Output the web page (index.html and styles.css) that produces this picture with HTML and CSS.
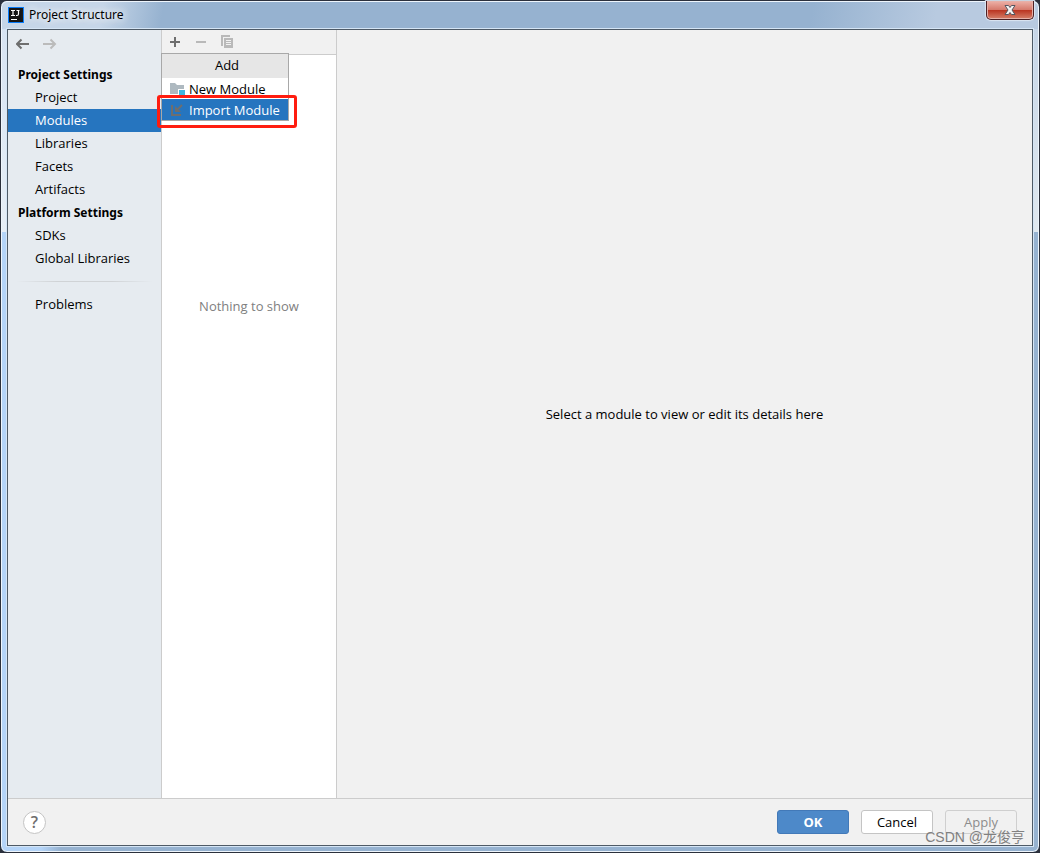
FILE: index.html
```
<!DOCTYPE html>
<html lang="en">
<head>
    <meta charset="UTF-8">
    <meta name="viewport" content="width=device-width, initial-scale=1.0">
    <title>Project Structure</title>

    <link rel="stylesheet" href="styles.css">
</head>
<body>
    <div class="window">
        <!-- Title bar -->
        <header class="title-bar">
            <svg class="app-icon" width="16" height="16" viewBox="0 0 16 16" aria-hidden="true">
                <rect width="16" height="16" fill="#087cfa"/>
                <rect x="1" y="1" width="14" height="14" fill="#151515"/>
                <path d="M3 3.500h4M5 3.500v5M3 8.500h4M8.500 3.500h3M10.500 3.500v3.500q0 1.500-1.500 1.500h-1M3 12.500h6" fill="none" stroke="#fff" stroke-width="1.200"/>
            </svg>
            <h1>Project Structure</h1>
            <button class="close-btn" aria-label="Close">
                <svg width="14" height="12" viewBox="0 0 14 12">
                    <path d="M2 1.500h3.500L7 3.500l1.500-2H12L9 6l3 4.500H8.500L7 8.500l-1.500 2H2L5 6z" fill="#f4f4f4" stroke="#53555f" stroke-width="1"/>
                </svg>
            </button>
        </header>

        <div class="dialog">
            <div class="content">
                <!-- Left navigation -->
                <aside class="sidebar">
                    <div class="history">
                        <button aria-label="Back">
                            <svg width="14" height="12" viewBox="0 0 14 12"><path d="M13 6H2M5.500 1.500L1 6L5.500 10.500"/></svg>
                        </button>
                        <button aria-label="Forward" disabled>
                            <svg width="14" height="12" viewBox="0 0 14 12"><path d="M0 6H11M7.500 1.500L12 6L7.500 10.500"/></svg>
                        </button>
                    </div>
                    <nav>
                        <h2>Project Settings</h2>
                        <a href="#project">Project</a>
                        <a href="#modules" class="active">Modules</a>
                        <a href="#libraries">Libraries</a>
                        <a href="#facets">Facets</a>
                        <a href="#artifacts">Artifacts</a>
                        <h2>Platform Settings</h2>
                        <a href="#sdks">SDKs</a>
                        <a href="#global-libraries">Global Libraries</a>
                        <hr>
                        <a href="#problems">Problems</a>
                    </nav>
                </aside>

                <!-- Module list -->
                <section class="modules">
                    <div class="toolbar">
                        <button aria-label="Add">
                            <svg width="16" height="16" viewBox="0 0 16 16"><path d="M8 3v10M3 8h10" stroke="#6e6e6e" stroke-width="2"/></svg>
                        </button>
                        <button aria-label="Remove" disabled>
                            <svg width="16" height="16" viewBox="0 0 16 16"><path d="M3 8h10" stroke="#b9b9b9" stroke-width="2"/></svg>
                        </button>
                        <button aria-label="Copy" disabled>
                            <svg width="16" height="16" viewBox="0 0 16 16">
                                <path d="M2 1h9v2H4v9H2z" fill="#b9b9b9"/>
                                <path d="M5 4h9v10H5zM7 6v1h5V6zM7 8v1h5V8zM7 10v1h5v-1z" fill="#b9b9b9" fill-rule="evenodd"/>
                            </svg>
                        </button>
                        <div class="popup">
                            <h3>Add</h3>
                            <button>
                                <svg width="16" height="16" viewBox="0 0 16 16">
                                    <path d="M1 2h5l2 2h7v4H9v5H1z" fill="#aeb9c0"/>
                                    <path d="M10 9h6v6h-6z" fill="#40b6e0"/>
                                </svg>
                                New Module
                            </button>
                            <button class="selected">
                                <svg width="16" height="16" viewBox="0 0 16 16">
                                    <path d="M3 3v10h9" fill="none" stroke="#6e6e6e" stroke-width="2"/>
                                    <path d="M13 3L8 8" stroke="#6e6e6e" stroke-width="2"/>
                                    <path d="M6 4v6h6z" fill="#6e6e6e"/>
                                </svg>
                                Import Module
                            </button>
                        </div>
                    </div>
                    <div class="module-list">
                        <p>Nothing to show</p>
                    </div>
                </section>

                <main class="details">
                    <p>Select a module to view or edit its details here</p>
                </main>
            </div>

            <!-- Buttons -->
            <footer class="footer">
                <button class="help-btn" aria-label="Help">?</button>
                <button class="btn primary">OK</button>
                <button class="btn">Cancel</button>
                <button class="btn" disabled>Apply</button>
            </footer>
        </div>
        <span class="watermark">CSDN @龙俊亨</span>
    </div>
</body>
</html>
```

FILE: styles.css
```
*,
*::before,
*::after {
    margin: 0;
    padding: 0;
    box-sizing: border-box;
}

body {
    background: #2b303c;
    font-family: 'Open Sans', 'Noto Sans CJK SC', sans-serif;
    font-size: 13px;
    line-height: 18px;
    color: #000;
}

button {
    border: none;
    background: none;
    font: inherit;
    color: inherit;
}

svg {
    display: block;
}

/* Window frame */
.window {
    position: relative;
    display: flex;
    flex-direction: column;
    height: 100vh;
    padding: 0 6px 6px;
    border: 1px solid #2b303c;
    border-radius: 7px;
    box-shadow: inset 0 0 0 1px #eef5fc;
    background:
        linear-gradient(#d5e2f2 0, #e6eef6 231px, transparent 231px) left / 7px 100% no-repeat,
        linear-gradient(#c3d3e6 0, #e0e8ef 231px, transparent 231px) right / 7px 100% no-repeat,
        linear-gradient(90deg, #b4d4f8 0, #b4d4f8 40px, #96b2d0 60px);
}

.title-bar {
    display: flex;
    align-items: center;
    height: 28px;
    margin: 0 -5px;
    padding: 0 4px 2px 6px;
    border-top: 1px solid #eef5fc;
    background: linear-gradient(100deg, #c6d6e8 0, #c6d6e8 100px, #96b2d0 160px, #96b2d0 78%, #b8cae0 90%);
    border-radius: 6px 6px 0 0;
}

.title-bar h1 {
    margin-left: 5px;
    font-family: 'Noto Sans', sans-serif;
    font-size: 12px;
    font-weight: normal;
    line-height: 16px;
    text-shadow: 0 0 8px #fff, 0 0 8px #fff;
}

.close-btn {
    display: flex;
    align-items: center;
    justify-content: center;
    align-self: flex-start;
    width: 48px;
    height: 19px;
    margin: -1px 0 0 auto;
    border: 1px solid #4c2024;
    border-top: none;
    border-radius: 0 0 5px 5px;
    background: linear-gradient(#eeb2a9 0, #d67a6d 48%, #b9321f 50%, #d6806a 100%);
    box-shadow: inset 0 0 0 1px #e6b0a8, 0 0 1px 1px #dce6f2;
}

.dialog {
    display: flex;
    flex: 1;
    flex-direction: column;
    min-height: 0;
    border: 1px solid #4e5a66;
    background: #f1f1f1;
    box-shadow: 0 0 0 1px #d5e5f5;
}

.content {
    display: flex;
    flex: 1;
    min-height: 0;
}

/* Left navigation */
.sidebar {
    width: 154px;
    border-right: 1px solid #ccc;
    background: #e6ebf0;
}

.history {
    display: flex;
    gap: 13px;
    padding: 8px;
    stroke: #6e6e6e;
    stroke-width: 2;
    fill: none;
}

.history button:disabled {
    stroke: #bbb;
}

.sidebar nav {
    padding-top: 5px;
}

.sidebar h2 {
    height: 23px;
    padding-left: 10px;
    font-family: 'Noto Sans', sans-serif;
    font-size: 12px;
    line-height: 24px;
}

.sidebar a {
    display: block;
    padding-left: 27px;
    line-height: 23px;
    color: #000;
    text-decoration: none;
}

.sidebar a.active {
    background: #2675bf;
    color: #fff;
}

.sidebar hr {
    height: 1px;
    margin: 11px 8px;
    border: none;
    background: linear-gradient(90deg, transparent, #d0d3d6 30%, #d0d3d6 70%, transparent);
}

/* Module list */
.modules {
    display: flex;
    flex-direction: column;
    width: 175px;
    border-right: 1px solid #ccc;
    background: #fff;
}

.toolbar {
    position: relative;
    display: flex;
    align-items: center;
    gap: 10px;
    height: 25px;
    padding-left: 5px;
    border-bottom: 1px solid #ccc;
    background: #f1f1f1;
}

.module-list {
    display: flex;
    flex: 1;
    flex-direction: column;
    align-items: center;
    color: #808080;
}

.module-list::before {
    content: "";
    flex: 1;
}

.module-list::after {
    content: "";
    flex: 2;
}

/* Add popup */
.popup {
    position: absolute;
    top: 23px;
    left: -1px;
    z-index: 1;
    width: 128px;
    border: 1px solid #a8a8a8;
    background: #fff;
}

.popup::after {
    content: "";
    position: absolute;
    right: -9px;
    bottom: -8px;
    left: -5px;
    height: 33px;
    border: 3px solid #ff1d10;
    border-radius: 3px;
}

.popup h3 {
    height: 24px;
    padding-left: 4px;
    background: #e6e6e6;
    font-size: 13px;
    font-weight: normal;
    line-height: 22px;
    text-align: center;
}

.popup button {
    display: flex;
    align-items: center;
    gap: 4px;
    width: 100%;
    height: 21px;
    padding-left: 7px;
    line-height: 20px;
    white-space: nowrap;
}

.popup button.selected {
    background: #2675bf;
    color: #fff;
}

.details {
    display: flex;
    flex: 1;
    align-items: center;
    justify-content: center;
}

/* Footer buttons */
.footer {
    display: flex;
    align-items: center;
    gap: 12px;
    height: 47px;
    padding: 0 15px;
    border-top: 1px solid #ccc;
}

.help-btn {
    width: 23px;
    height: 23px;
    margin-right: auto;
    border: 1px solid #c4c4c4;
    border-radius: 50%;
    background: #fff;
    font-size: 16px;
    font-weight: 600;
    color: #6e6e6e;
}

.btn {
    width: 72px;
    height: 24px;
    border: 1px solid #c4c4c4;
    border-radius: 3px;
    background: #fff;
}

.btn.primary {
    border-color: #4279b8;
    background: #4d89c9;
    font-weight: bold;
    color: #fff;
}

.btn:disabled {
    border-color: #cfcfcf;
    background: none;
    color: #8c8c8c;
}

.watermark {
    position: absolute;
    right: 14px;
    bottom: 6px;
    font-family: 'Liberation Sans', 'Noto Sans CJK SC', sans-serif;
    font-size: 14px;
    color: #808080;
}
```
